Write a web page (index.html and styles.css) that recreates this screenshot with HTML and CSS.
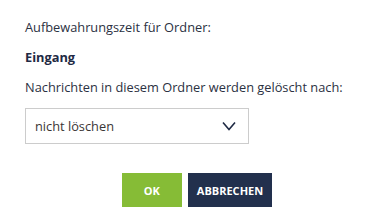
FILE: index.html
```html
<!DOCTYPE html>
<html lang="de">
<head>
<meta charset="utf-8">
<link rel="stylesheet" href="styles.css">
</head>
<body>
<div class="dialog">
  <p class="line">Aufbewahrungszeit für Ordner:</p>
  <p class="line folder">Eingang</p>
  <p class="line">Nachrichten in diesem Ordner werden gelöscht nach:</p>
  <div class="select">
    <span class="select-value">nicht löschen</span>
    <svg class="chevron" width="14" height="10" viewBox="0 0 14 10"><path d="M1 1.5 L7 8.5 L13 1.5" fill="none" stroke="#1f2a44" stroke-width="1.6"/></svg>
  </div>
  <div class="actions">
    <button class="btn btn-ok">OK</button>
    <button class="btn btn-cancel">ABBRECHEN</button>
  </div>
</div>
</body>
</html>
```
FILE: styles.css
```css
html, body {
  margin: 0;
  padding: 0;
  background: #fff;
}
body {
  font-family: "Open Sans", "Liberation Sans", sans-serif;
  font-size: 12.8px;
  color: #2b3142;
}
.dialog {
  padding: 18px 16px 0 25px;
  display: flex;
  flex-direction: column;
}
.line {
  margin: 0 0 12px 0;
  line-height: 18px;
}
.folder {
  font-weight: 700;
  color: #1f2a44;
}
.select {
  box-sizing: border-box;
  width: 224px;
  height: 36px;
  border: 1px solid #cccccc;
  display: flex;
  align-items: center;
  justify-content: space-between;
  padding: 0 12px 0 9px;
  color: #3a3535;
}
.chevron {
  display: block;
}
.actions {
  margin-top: 29px;
  display: flex;
  justify-content: center;
  gap: 6px;
}
.btn {
  height: 34px;
  min-width: 60px;
  padding: 0 9px;
  border: 0;
  font-family: "Open Sans", "Liberation Sans", sans-serif;
  font-weight: 700;
  font-size: 11px;
  color: #fff;
  cursor: pointer;
}
.btn-ok {
  background: #86bc36;
}
.btn-cancel {
  background: #22304d;
}
```
